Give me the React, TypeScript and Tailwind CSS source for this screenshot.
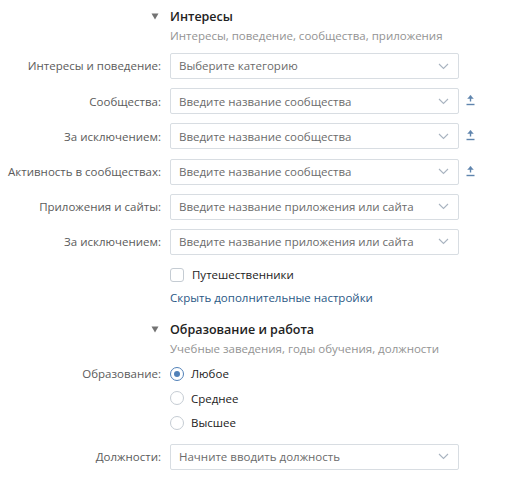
import { ReactNode } from 'react'

const font = { fontFamily: '"Open Sans", "Noto Sans", sans-serif' }

const Chevron = () => (
	<svg width="11" height="7" viewBox="0 0 11 7" className="shrink-0">
		<path d="M1 1l4.5 4.5L10 1" fill="none" stroke="#a9b4c0" strokeWidth="1.1" />
	</svg>
)

const UploadIcon = () => (
	<svg width="9" height="12" viewBox="0 0 9 12">
		<path d="M4.5 1.5v6" stroke="#5f84ad" strokeWidth="1.4" />
		<path d="M1.2 4.8L4.5 1.2l3.3 3.6z" fill="#5f84ad" />
		<path d="M0.5 10.5h8" stroke="#5f84ad" strokeWidth="1.4" />
	</svg>
)

const Section = ({ title, subtitle }: { title: string; subtitle: string }) => (
	<div className="flex">
		<div className="flex w-[161px] shrink-0 justify-end pr-[2px] pt-[5px]">
			<svg width="8" height="7" viewBox="0 0 8 7">
				<path d="M0.5 0.5h7L4 6.5z" fill="#737373" />
			</svg>
		</div>
		<div className="ml-[9px]">
			<div className="text-[12.5px] font-semibold leading-[18px] text-[#222]">{title}</div>
			<div className="mt-[1px] text-[11.5px] leading-[18px] text-[#939393]">{subtitle}</div>
		</div>
	</div>
)

const Row = ({ label, children }: { label: string; children: ReactNode }) => (
	<div className="flex items-center">
		<div className="w-[161px] shrink-0 whitespace-nowrap text-right text-[11.5px] text-[#5b5b5b]">{label}</div>
		<div className="ml-[9px] flex items-center">{children}</div>
	</div>
)

const Select = ({ placeholder, upload }: { placeholder: string; upload?: boolean }) => (
	<>
		<div className="flex h-[26px] w-[289px] items-center justify-between rounded-[2px] border border-[#d8dde2] bg-white pl-[8px] pr-[9px]">
			<span className="text-[11.5px] text-[#6b6b6b]">{placeholder}</span>
			<Chevron />
		</div>
		{upload && (
			<div className="ml-[7px] mt-[-2px]">
				<UploadIcon />
			</div>
		)}
	</>
)

const Radio = ({ label, checked }: { label: string; checked?: boolean }) => (
	<div className="flex h-[24.5px] items-center">
		<span
			className={`flex h-[14px] w-[14px] items-center justify-center rounded-full border ${
				checked ? 'border-[#5181b8]' : 'border-[#c5ccd3]'
			}`}
		>
			{checked && <span className="h-[6px] w-[6px] rounded-full bg-[#5181b8]" />}
		</span>
		<span className="ml-[7px] text-[11.5px] text-[#222]">{label}</span>
	</div>
)

export default function App() {
	return (
		<div className="h-[490px] w-[517px] bg-white pt-[8px]" style={font}>
			<Section title="Интересы" subtitle="Интересы, поведение, сообщества, приложения" />

			<div className="mt-[8px] flex flex-col gap-[9.2px]">
				<Row label="Интересы и поведение:">
					<Select placeholder="Выберите категорию" />
				</Row>
				<Row label="Сообщества:">
					<Select placeholder="Введите название сообщества" upload />
				</Row>
				<Row label="За исключением:">
					<Select placeholder="Введите название сообщества" upload />
				</Row>
				<Row label="Активность в сообществах:">
					<Select placeholder="Введите название сообщества" upload />
				</Row>
				<Row label="Приложения и сайты:">
					<Select placeholder="Введите название приложения или сайта" />
				</Row>
				<Row label="За исключением:">
					<Select placeholder="Введите название приложения или сайта" />
				</Row>
			</div>

			<div className="ml-[170px] mt-[11px] flex items-center">
				<span className="h-[14px] w-[14px] rounded-[3px] border border-[#c5ccd3]" />
				<span className="ml-[8px] text-[11.5px] text-[#222]">Путешественники</span>
			</div>

			<div className="ml-[170px] mt-[6px] text-[11.5px] text-[#2a5885]">
				Скрыть дополнительные настройки
			</div>

			<div className="mt-[15px]">
				<Section title="Образование и работа" subtitle="Учебные заведения, годы обучения, должности" />
			</div>

			<div className="mt-[3px] flex">
				<div className="w-[161px] shrink-0 pt-[4px] text-right text-[11.5px] text-[#5b5b5b]">Образование:</div>
				<div className="ml-[9px] flex flex-col">
					<Radio label="Любое" checked />
					<Radio label="Среднее" />
					<Radio label="Высшее" />
				</div>
			</div>

			<div className="mt-[9px]">
				<Row label="Должности:">
					<Select placeholder="Начните вводить должность" />
				</Row>
			</div>
		</div>
	)
}
